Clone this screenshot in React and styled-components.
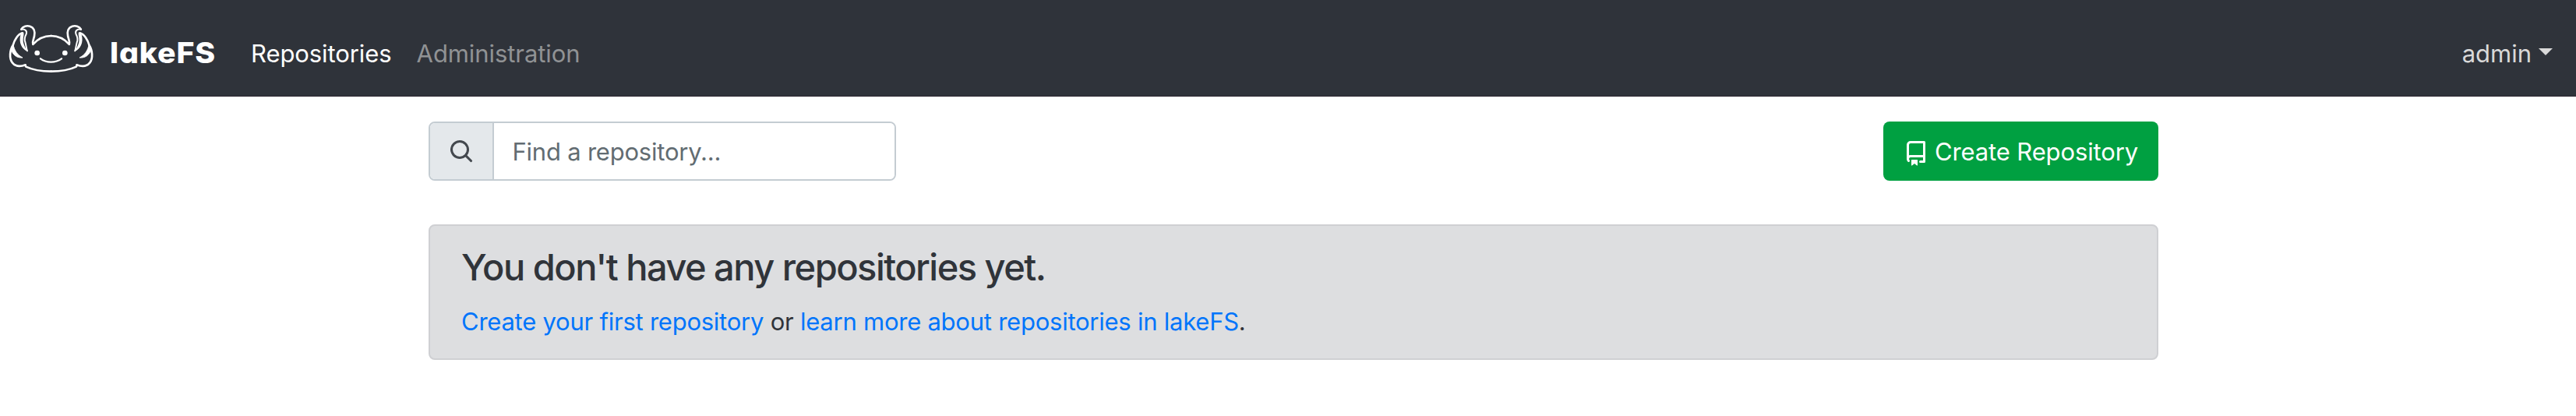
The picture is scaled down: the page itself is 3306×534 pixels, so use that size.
import React from "react";
import styled, { createGlobalStyle } from "styled-components";

const GlobalStyle = createGlobalStyle`
  * { box-sizing: border-box; }
  body {
    margin: 0;
    background: #fff;
    color: #30343a;
    font: 430 31px/48px Inter, "Liberation Sans", sans-serif;
  }
  a { text-decoration: none; }
`;

const Navbar = styled.header`
  display: flex;
  align-items: center;
  height: 124px;
  padding: 14px 30px 0 11px;
  background: #2f333a;
  border-bottom: 1px solid #2c2730;
`;

const Brand = styled.a`
  display: flex;
  align-items: center;
  width: 311px;
  color: #fff;
`;

const Mascot = styled.svg`
  display: block;
  flex: none;
  width: 109px;
  height: 63.33px;
  margin-top: -12px;
`;

const Wordmark = styled.span`
  margin-left: 21px;
  font-size: 37px;
  font-weight: 800;
  font-feature-settings: "cv11";
  letter-spacing: 0.8px;
  transform: scaleX(1.06);
  transform-origin: left;
`;

const Nav = styled.nav`
  display: flex;
  flex: 1;
  gap: 32px;
  letter-spacing: -0.08px;
`;

const NavLink = styled.a`
  color: ${(p) => (p.$active ? "#fff" : "#909294")};
`;

const UserMenu = styled.a`
  display: flex;
  align-items: center;
  gap: 9px;
  color: #d9d9d9;

  &::after {
    content: "";
    margin-top: -4px;
    border: 9.5px solid transparent;
    border-top-color: currentColor;
    border-bottom: 0;
  }
`;

const Container = styled.main`
  width: 2220px;
  margin-left: 550px;
  padding-top: 32px;
`;

const Toolbar = styled.div`
  display: flex;
  justify-content: space-between;
  height: 76px;
`;

const SearchGroup = styled.label`
  display: flex;
  width: 600px;
  border: 2px solid #c4ccd2;
  border-radius: 8px;
  overflow: hidden;
`;

const SearchAddon = styled.span`
  display: flex;
  align-items: center;
  justify-content: center;
  width: 82px;
  background: #e4e8eb;
  border-right: 2px solid #c4ccd2;
  color: #43484e;
`;

const SearchInput = styled.input`
  flex: 1;
  min-width: 0;
  padding: 1px 24px 0 23.5px;
  border: 0;
  outline: 0;
  background: #fff;
  font: inherit;
  letter-spacing: -0.22px;

  &::placeholder {
    color: #626c72;
    opacity: 1;
  }
`;

const CreateButton = styled.button`
  display: flex;
  align-items: center;
  gap: 8px;
  width: 353px;
  padding: 0 0 0 26px;
  border: 0;
  border-radius: 8px;
  background: #00a041;
  color: #fff;
  font: inherit;
  letter-spacing: -0.13px;
  white-space: nowrap;
`;

const ButtonLabel = styled.span`
  padding-top: 1px;
`;

const Icon = styled.svg`
  display: block;
  flex: none;
  width: 32px;
  height: 32px;
  margin-top: ${(p) => p.$drop || 0}px;
  fill: currentColor;
`;

const Notice = styled.section`
  height: 174px;
  margin-top: 56px;
  padding: 24px 40px;
  background: #dddee0;
  border: 2px solid #cfd0d3;
  border-radius: 8px;
`;

const NoticeTitle = styled.h4`
  margin: 0 0 17px;
  font-size: 47px;
  font-weight: 530;
  line-height: 57.6px;
  letter-spacing: -1.52px;
`;

const NoticeText = styled.p`
  margin: 0;
  letter-spacing: -0.24px;
`;

const TextLink = styled.a`
  color: #0075fb;
`;

function AxolotlSide() {
  return (
    <>
      <path d="M82 113C88 100 104 98 115 101C131 106 136 122 132 140C129 152 124 160 127 171C145 150 170 138 197 138" />
      <path strokeWidth="6" d="M82 113C98 111 105 120 101 131C95 142 92 150 97 162C101 176 101 186 105 196" />
      <path fill="#fff" stroke="none" d="M79 134C72 164 82 187 107 199C96 181 88 167 89 152C89 142 93 134 91 124Z" />
      <path d="M86 127C68 132 55 155 50 174C38 192 34 225 48 242C60 257 80 257 98 250C98 253 98 255 100 257C127 270 160 275 197 275" />
      <path fill="#fff" strokeWidth="3" d="M51 172C55 195 67 212 87 222C65 224 47 211 44 190Z" />
    </>
  );
}

export default function App() {
  return (
    <>
      <GlobalStyle />
      <Navbar>
        <Brand>
          <Mascot viewBox="33 93 327 190" fill="none" stroke="#fff" strokeWidth="8" strokeLinejoin="round" strokeLinecap="round">
            <AxolotlSide />
            <g transform="translate(393.5 0) scale(-1 1)">
              <AxolotlSide />
            </g>
            <circle cx="143" cy="204" r="10" fill="#fff" stroke="none" />
            <circle cx="250" cy="204" r="10" fill="#fff" stroke="none" />
            <path strokeWidth="7" d="M156 226C178 243 214 243 237 226" />
          </Mascot>
          <Wordmark>lakeFS</Wordmark>
        </Brand>
        <Nav>
          <NavLink $active>Repositories</NavLink>
          <NavLink>Administration</NavLink>
        </Nav>
        <UserMenu>admin</UserMenu>
      </Navbar>
      <Container>
        <Toolbar>
          <SearchGroup>
            <SearchAddon>
              <Icon viewBox="0 0 16 16">
                <path fillRule="evenodd" d="M11.5 7a4.499 4.499 0 11-8.998 0A4.499 4.499 0 0111.5 7zm-.82 4.74a6 6 0 111.06-1.06l3.04 3.04a.75.75 0 11-1.06 1.06l-3.04-3.04z" />
              </Icon>
            </SearchAddon>
            <SearchInput placeholder="Find a repository..." />
          </SearchGroup>
          <CreateButton>
            <Icon $drop={6} viewBox="0 0 16 16">
              <path fillRule="evenodd" d="M2 2.5A2.5 2.5 0 014.5 0h8.75a.75.75 0 01.75.75v12.5a.75.75 0 01-.75.75h-2.5a.75.75 0 110-1.5h1.75v-2h-8a1 1 0 00-.714 1.7.75.75 0 01-1.072 1.05A2.495 2.495 0 012 11.5v-9zm10.5-1V9h-8c-.356 0-.694.074-1 .208V2.5a1 1 0 011-1h8zM5 12.25v3.25a.25.25 0 00.4.2l1.45-1.087a.25.25 0 01.3 0L8.6 15.7a.25.25 0 00.4-.2v-3.25a.25.25 0 00-.25-.25h-3.5a.25.25 0 00-.25.25z" />
            </Icon>
            <ButtonLabel>Create Repository</ButtonLabel>
          </CreateButton>
        </Toolbar>
        <Notice>
          <NoticeTitle>You don't have any repositories yet.</NoticeTitle>
          <NoticeText>
            <TextLink>Create your first repository</TextLink> or{" "}
            <TextLink>learn more about repositories in lakeFS</TextLink>.
          </NoticeText>
        </Notice>
      </Container>
    </>
  );
}
